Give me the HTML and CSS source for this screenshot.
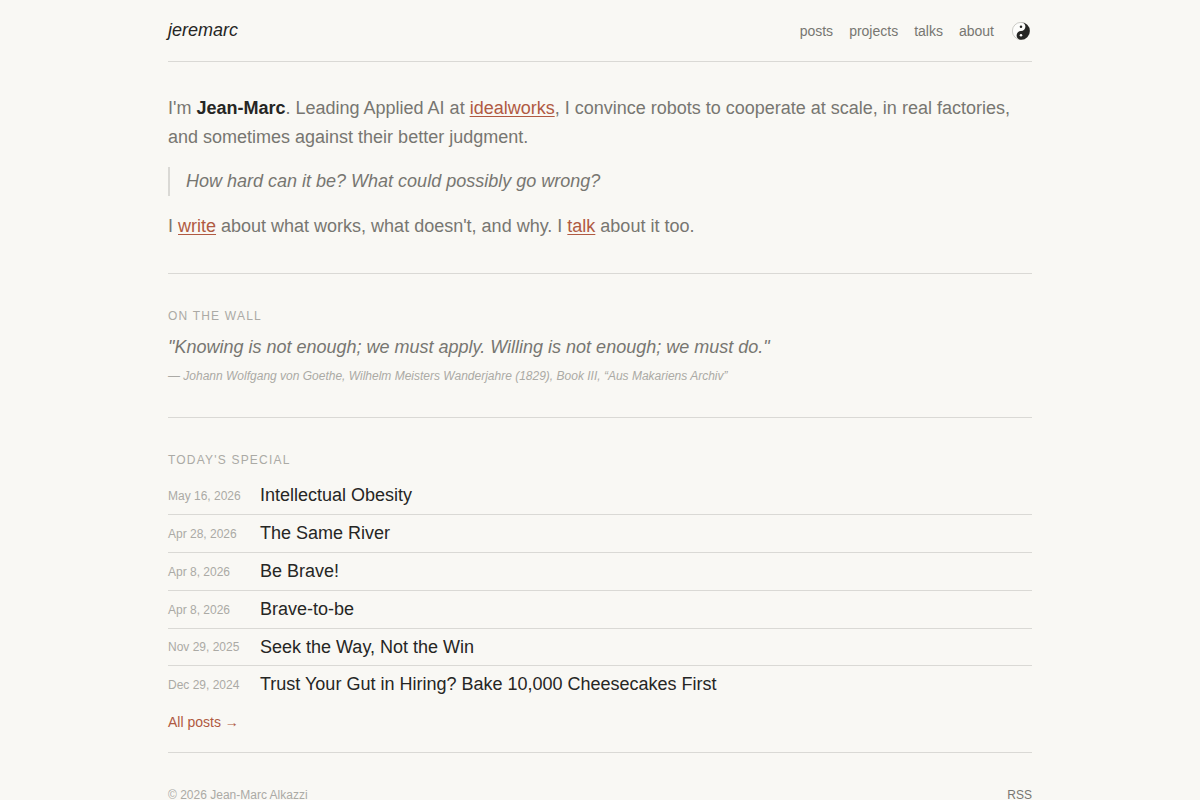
FILE: index.html
```html
<!DOCTYPE html>
<html lang="en">
<head>
    <meta charset="UTF-8">
    <meta name="viewport" content="width=device-width, initial-scale=1.0">
    <title>jeremarc</title>
    <link rel="stylesheet" href="styles.css">
</head>
<body>
    <div class="page">
        <header class="site-header">
            <a class="logo" href="#">jeremarc</a>
            <nav class="site-nav">
                <a href="#posts">posts</a>
                <a href="#projects">projects</a>
                <a href="#talks">talks</a>
                <a href="#about">about</a>
                <button class="theme-toggle" type="button" aria-label="Toggle theme">
                    <svg viewBox="0 0 100 100" width="18" height="18" aria-hidden="true">
                        <circle cx="50" cy="50" r="48" fill="#fdfdfb" stroke="#a3a39f" stroke-width="3"/>
                        <path d="M50 1A49 49 0 0 1 50 99A24.5 24.5 0 0 1 50 50A24.5 24.5 0 0 0 50 1Z" fill="#262624"/>
                        <circle cx="50" cy="26" r="7" fill="#262624"/>
                        <circle cx="50" cy="74" r="7" fill="#fdfdfb"/>
                    </svg>
                </button>
            </nav>
        </header>
        <main>
            <section class="intro">
                <p>I'm <strong>Jean-Marc</strong>. Leading Applied AI at <a href="#idealworks">idealworks</a>, I convince robots to cooperate at scale, in real factories, and sometimes against their better judgment.</p>
                <blockquote>How hard can it be? What could possibly go wrong?</blockquote>
                <p>I <a href="#posts">write</a> about what works, what doesn't, and why. I <a href="#talks">talk</a> about it too.</p>
            </section>
            <section class="wall">
                <h2>On the wall</h2>
                <p class="quote">"Knowing is not enough; we must apply. Willing is not enough; we must do."</p>
                <cite>— Johann Wolfgang von Goethe, Wilhelm Meisters Wanderjahre (1829), Book III, “Aus Makariens Archiv”</cite>
            </section>
            <section class="special" id="posts">
                <h2>Today's special</h2>
                <ul class="post-list">
                    <li><time datetime="2026-05-16">May 16, 2026</time><a href="#">Intellectual Obesity</a></li>
                    <li><time datetime="2026-04-28">Apr 28, 2026</time><a href="#">The Same River</a></li>
                    <li><time datetime="2026-04-08">Apr 8, 2026</time><a href="#">Be Brave!</a></li>
                    <li><time datetime="2026-04-08">Apr 8, 2026</time><a href="#">Brave-to-be</a></li>
                    <li><time datetime="2025-11-29">Nov 29, 2025</time><a href="#">Seek the Way, Not the Win</a></li>
                    <li><time datetime="2024-12-29">Dec 29, 2024</time><a href="#">Trust Your Gut in Hiring? Bake 10,000 Cheesecakes First</a></li>
                </ul>
                <p class="more"><a href="#posts">All posts →</a></p>
            </section>
        </main>
        <footer class="site-footer">
            <span>© 2026 Jean-Marc Alkazzi</span>
            <a href="#rss">RSS</a>
        </footer>
    </div>
</body>
</html>
```

FILE: styles.css
```css
:root {
    --bg: #f9f8f4;
    --text: #262624;
    --muted: #777671;
    --faint: #abaaa5;
    --line: #dad9d5;
    --accent: #b05a42;
}
* {
    box-sizing: border-box;
}
body {
    margin: 0;
    background: var(--bg);
    color: var(--text);
    font-family: "Liberation Sans", Arial, sans-serif;
    font-size: 18px;
    line-height: 1.6;
}
h2, p, ul, blockquote {
    margin: 0;
    padding: 0;
}
a {
    color: inherit;
    text-decoration: none;
}
.page {
    max-width: 912px;
    margin: 0 auto;
    padding: 0 24px;
}
.site-header {
    display: flex;
    justify-content: space-between;
    align-items: baseline;
    padding: 16px 0;
    border-bottom: 1px solid var(--line);
}
.logo {
    font-style: italic;
}
.site-nav {
    display: flex;
    align-items: center;
    gap: 16px;
    font-size: 14px;
    color: var(--muted);
}
.theme-toggle {
    display: flex;
    padding: 0 2px;
    border: none;
    background: none;
    cursor: pointer;
}
section {
    padding: 32px 0;
    border-bottom: 1px solid var(--line);
}
.intro {
    color: var(--muted);
}
.intro strong {
    color: var(--text);
}
.intro a {
    color: var(--accent);
    text-decoration: underline;
    text-decoration-thickness: 1px;
    text-underline-offset: 2px;
}
.intro blockquote {
    margin: 16px 0;
    padding-left: 16px;
    border-left: 2px solid var(--line);
    font-style: italic;
}
h2 {
    margin-bottom: 6px;
    color: var(--faint);
    font-size: 12px;
    font-weight: normal;
    line-height: 21px;
    letter-spacing: 0.1em;
    text-transform: uppercase;
}
.wall {
    padding-bottom: 30px;
}
.quote {
    color: var(--muted);
    font-style: italic;
}
.wall cite {
    display: block;
    margin-top: 4px;
    color: var(--faint);
    font-size: 12px;
    line-height: 1.8;
}
.special {
    padding-bottom: 16px;
}
.post-list {
    list-style: none;
}
.post-list li {
    display: flex;
    align-items: center;
    gap: 12px;
    padding: 4px 0;
    border-bottom: 1px solid var(--line);
}
.post-list li:last-child {
    border-bottom: none;
}
.post-list time {
    flex: 0 0 80px;
    padding-top: 2px;
    color: var(--faint);
    font-size: 12px;
    line-height: 21px;
}
.more {
    margin-top: 4px;
}
.more a {
    color: var(--accent);
    font-size: 14px;
}
.site-footer {
    display: flex;
    justify-content: space-between;
    padding: 32px 0;
    color: var(--faint);
    font-size: 12px;
    line-height: 21px;
}
.site-footer a {
    color: var(--muted);
}
```
